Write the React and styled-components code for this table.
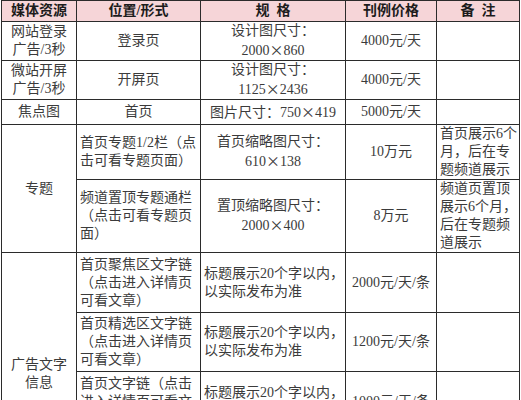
import React from "react";
import styled, { createGlobalStyle } from "styled-components";

const GlobalStyle = createGlobalStyle`
  body {
    margin: 0;
    background: #ffffff;
    font-family: "Liberation Serif", "Noto Sans CJK SC", serif;
  }
`;

const Page = styled.div`
  padding-left: 1px;
`;

const Table = styled.table`
  border-collapse: collapse;
  table-layout: fixed;
  width: 518px;
  font-size: 14px;
  line-height: 18px;
  color: #3b3b3b;
`;

const Row = styled.tr`
  height: ${(p) => p.$h}px;
`;

const Head = styled.th`
  background: #f6d5d8;
  color: #1c1c1c;
  font-weight: 700;
  border: 1px solid #2b2b2b;
  padding: 0;
  text-align: center;
  vertical-align: middle;
  white-space: nowrap;
`;

const Cell = styled.td`
  border: 1px solid #2b2b2b;
  padding: 0 ${(p) => (p.$left ? "3px" : "2px")};
  text-align: ${(p) => (p.$left ? "left" : "center")};
  vertical-align: middle;
  white-space: nowrap;
  overflow: hidden;
`;

const Mul = styled.span`
  font-family: "Noto Sans CJK SC", sans-serif;
`;

const Lines = ({ children }) =>
  children.map((line, i) => (
    <React.Fragment key={i}>
      {i > 0 && <br />}
      {line}
    </React.Fragment>
  ));

const Size = ({ label, w, h }) => (
  <>
    {label}
    <br />
    {w}
    <Mul>×</Mul>
    {h}
  </>
);

export default function App() {
  return (
    <Page>
      <GlobalStyle />
      <Table>
        <colgroup>
          <col style={{ width: 75 }} />
          <col style={{ width: 124 }} />
          <col style={{ width: 145 }} />
          <col style={{ width: 91 }} />
          <col style={{ width: 83 }} />
        </colgroup>
        <tbody>
          <Row $h={21}>
            <Head>媒体资源</Head>
            <Head>位置/形式</Head>
            <Head>规{"\u2002"}格</Head>
            <Head>刊例价格</Head>
            <Head>备{"\u2002"}注</Head>
          </Row>
          <Row $h={37}>
            <Cell>
              <Lines>{["网站登录", "广告/3秒"]}</Lines>
            </Cell>
            <Cell>登录页</Cell>
            <Cell>
              <Size label="设计图尺寸：" w="2000" h="860" />
            </Cell>
            <Cell>4000元/天</Cell>
            <Cell />
          </Row>
          <Row $h={38}>
            <Cell>
              <Lines>{["微站开屏", "广告/3秒"]}</Lines>
            </Cell>
            <Cell>开屏页</Cell>
            <Cell>
              <Size label="设计图尺寸：" w="1125" h="2436" />
            </Cell>
            <Cell>4000元/天</Cell>
            <Cell />
          </Row>
          <Row $h={25}>
            <Cell>焦点图</Cell>
            <Cell>首页</Cell>
            <Cell>
              图片尺寸：750<Mul>×</Mul>419
            </Cell>
            <Cell>5000元/天</Cell>
            <Cell />
          </Row>
          <Row $h={54}>
            <Cell rowSpan={2}>专题</Cell>
            <Cell $left>
              <Lines>{["首页专题1/2栏（点", "击可看专题页面）"]}</Lines>
            </Cell>
            <Cell>
              <Size label="首页缩略图尺寸：" w="610" h="138" />
            </Cell>
            <Cell>10万元</Cell>
            <Cell $left>
              <Lines>{["首页展示6个", "月，后在专", "题频道展示"]}</Lines>
            </Cell>
          </Row>
          <Row $h={72}>
            <Cell $left>
              <Lines>{["频道置顶专题通栏", "（点击可看专题页", "面）"]}</Lines>
            </Cell>
            <Cell>
              <Size label="置顶缩略图尺寸：" w="2000" h="400" />
            </Cell>
            <Cell>8万元</Cell>
            <Cell $left>
              <Lines>{["频道页置顶", "展示6个月，", "后在专题频", "道展示"]}</Lines>
            </Cell>
          </Row>
          <Row $h={60}>
            <Cell rowSpan={4}>
              <Lines>{["广告文字", "信息"]}</Lines>
            </Cell>
            <Cell $left>
              <Lines>{["首页聚焦区文字链", "（点击进入详情页", "可看文章）"]}</Lines>
            </Cell>
            <Cell $left>
              <Lines>{["标题展示20个字以内，", "以实际发布为准"]}</Lines>
            </Cell>
            <Cell>2000元/天/条</Cell>
            <Cell />
          </Row>
          <Row $h={59}>
            <Cell $left>
              <Lines>{["首页精选区文字链", "（点击进入详情页", "可看文章）"]}</Lines>
            </Cell>
            <Cell $left>
              <Lines>{["标题展示20个字以内，", "以实际发布为准"]}</Lines>
            </Cell>
            <Cell>1200元/天/条</Cell>
            <Cell />
          </Row>
          <Row $h={60}>
            <Cell $left>
              <Lines>{["首页文字链（点击", "进入详情页可看文", "章）"]}</Lines>
            </Cell>
            <Cell $left>
              <Lines>{["标题展示20个字以内，", "以实际发布为准"]}</Lines>
            </Cell>
            <Cell>1000元/天/条</Cell>
            <Cell />
          </Row>
          <Row $h={63}>
            <Cell $left>
              <Lines>{["频道页文字链（点", "击进入详情页可看", "文章）"]}</Lines>
            </Cell>
            <Cell $left>
              <Lines>{["标题展示20个字以内，", "以实际发布为准"]}</Lines>
            </Cell>
            <Cell>800元/天/条</Cell>
            <Cell />
          </Row>
        </tbody>
      </Table>
    </Page>
  );
}
